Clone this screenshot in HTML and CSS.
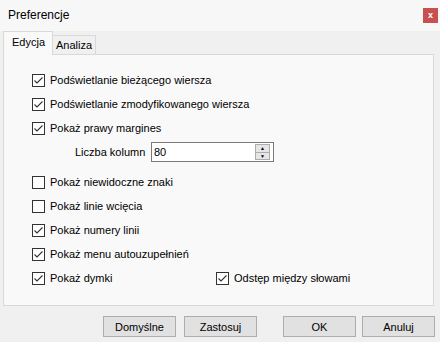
FILE: index.html
```html
<!DOCTYPE html>
<html lang="pl">
<head>
  <meta charset="UTF-8">
  <title>Preferencje</title>
  <link rel="stylesheet" href="styles.css">
</head>
<body>
  <div class="window">
    <div class="titlebar">
      <span class="title">Preferencje</span>
      <span class="close">x</span>
    </div>

    <div class="tabs">
      <div class="tab active">Edycja</div>
      <div class="tab">Analiza</div>
    </div>

    <div class="panel">
      <div class="row">
        <span class="check on"><svg width="13" height="13" viewBox="0 0 13 13"><path d="M2.5 6.5 L5 9 L10.5 3.5" /></svg></span>
        <span class="label">Podświetlanie bieżącego wiersza</span>
      </div>
      <div class="row">
        <span class="check on"><svg width="13" height="13" viewBox="0 0 13 13"><path d="M2.5 6.5 L5 9 L10.5 3.5" /></svg></span>
        <span class="label">Podświetlanie zmodyfikowanego wiersza</span>
      </div>
      <div class="row">
        <span class="check on"><svg width="13" height="13" viewBox="0 0 13 13"><path d="M2.5 6.5 L5 9 L10.5 3.5" /></svg></span>
        <span class="label">Pokaż prawy margines</span>
      </div>
      <div class="row number-row">
        <span class="label">Liczba kolumn</span>
        <div class="spin">
          <span class="spin-value">80</span>
          <div class="spin-buttons">
            <span class="spin-btn">&#9650;</span>
            <span class="spin-btn">&#9660;</span>
          </div>
        </div>
      </div>

      <div class="group">
        <div class="row">
          <span class="check"></span>
          <span class="label">Pokaż niewidoczne znaki</span>
        </div>
        <div class="row">
          <span class="check"></span>
          <span class="label">Pokaż linie wcięcia</span>
        </div>
        <div class="row">
          <span class="check on"><svg width="13" height="13" viewBox="0 0 13 13"><path d="M2.5 6.5 L5 9 L10.5 3.5" /></svg></span>
          <span class="label">Pokaż numery linii</span>
        </div>
        <div class="row">
          <span class="check on"><svg width="13" height="13" viewBox="0 0 13 13"><path d="M2.5 6.5 L5 9 L10.5 3.5" /></svg></span>
          <span class="label">Pokaż menu autouzupełnień</span>
        </div>
        <div class="row split">
          <div class="cell">
            <span class="check on"><svg width="13" height="13" viewBox="0 0 13 13"><path d="M2.5 6.5 L5 9 L10.5 3.5" /></svg></span>
            <span class="label">Pokaż dymki</span>
          </div>
          <div class="cell">
            <span class="check on"><svg width="13" height="13" viewBox="0 0 13 13"><path d="M2.5 6.5 L5 9 L10.5 3.5" /></svg></span>
            <span class="label">Odstęp między słowami</span>
          </div>
        </div>
      </div>
    </div>

    <div class="buttons">
      <button class="btn">Domyślne</button>
      <button class="btn gap-small">Zastosuj</button>
      <button class="btn gap-large">OK</button>
      <button class="btn gap-tiny">Anuluj</button>
    </div>
  </div>
</body>
</html>
```

FILE: styles.css
```css
html, body {
  margin: 0;
  padding: 0;
}
body {
  font-family: "Liberation Sans", Arial, sans-serif;
  font-size: 11px;
  color: #000000;
  background-color: #f0f0f0;
}
.window {
  width: 440px;
  height: 342px;
  display: flex;
  flex-direction: column;
  overflow: hidden;
}
.titlebar {
  height: 31px;
  display: flex;
  align-items: center;
  justify-content: space-between;
  background-color: #f7f7f7;
  padding: 0 2px 0 8px;
  box-sizing: border-box;
}
.title {
  font-size: 12px;
  margin-top: -1px;
}
.close {
  width: 15px;
  height: 15px;
  background-color: #c75050;
  color: #ffffff;
  font-size: 9px;
  font-weight: bold;
  line-height: 14px;
  text-align: center;
  margin-top: -1px;
}
.tabs {
  display: flex;
  align-items: flex-end;
  margin-left: 3px;
  height: 23px;
  position: relative;
  z-index: 1;
}
.tab {
  height: 19px;
  line-height: 18px;
  padding: 0 3px;
  border: 1px solid #d9d9d9;
  border-left: none;
  border-bottom: none;
  background-color: #f0f0f0;
  box-sizing: border-box;
}
.tab.active {
  height: 24px;
  line-height: 21px;
  padding: 0 7px 0 8px;
  border-left: 1px solid #d9d9d9;
  background-color: #f9f9f9;
  margin-bottom: -1px;
}
.panel {
  margin-left: 3px;
  width: 431px;
  height: 252px;
  border: 1px solid #d9d9d9;
  background-color: #f9f9f9;
  box-sizing: border-box;
  padding: 13px 0 0 28px;
}
.row {
  height: 24px;
  display: flex;
  align-items: center;
  white-space: nowrap;
}
.check {
  width: 13px;
  height: 13px;
  border: 1px solid #333333;
  background-color: #ffffff;
  box-sizing: border-box;
  display: flex;
  align-items: center;
  justify-content: center;
  margin-right: 5px;
  flex-shrink: 0;
}
.check svg {
  display: block;
  margin: -1px;
}
.check svg path {
  fill: none;
  stroke: #333333;
  stroke-width: 1.1;
}
.number-row {
  padding-left: 43px;
}
.number-row .label {
  width: 76px;
}
.spin {
  width: 123px;
  height: 20px;
  border: 1px solid #7a7a7a;
  background-color: #ffffff;
  box-sizing: border-box;
  display: flex;
  align-items: center;
  justify-content: space-between;
}
.spin-value {
  padding-left: 2px;
}
.spin-buttons {
  display: flex;
  flex-direction: column;
  width: 15px;
  height: 16px;
  margin-right: 3px;
}
.spin-btn {
  flex: 1;
  border: 1px solid #adadad;
  background-color: #e6e6e6;
  font-size: 5px;
  line-height: 6px;
  text-align: center;
  color: #000000;
}
.spin-btn + .spin-btn {
  border-top: none;
}
.group {
  margin-top: 6px;
}
.split {
  justify-content: flex-start;
}
.cell {
  display: flex;
  align-items: center;
  width: 184px;
}
.buttons {
  display: flex;
  padding-left: 103px;
  margin-top: 10px;
}
.btn {
  width: 73px;
  height: 21px;
  padding: 0;
  font-family: "Liberation Sans", Arial, sans-serif;
  font-size: 11px;
  color: #000000;
  background-color: #e1e1e1;
  border: 1px solid #adadad;
  border-radius: 0;
}
.gap-small {
  margin-left: 8px;
}
.gap-large {
  margin-left: 26px;
}
.gap-tiny {
  margin-left: 6px;
}
```
